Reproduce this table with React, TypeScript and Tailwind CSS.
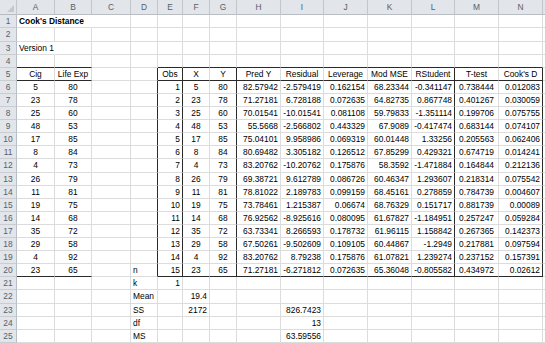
import React from "react";

const colLetters = ["A","B","C","D","E","F","G","H","I","J","K","L","M","N",""];

type Row = (string)[];

const blank = (): Row => Array(15).fill("");

const dataRows: string[][] = [
  ["5","80","1","5","80","82.57942","-2.579419","0.162154","68.23344","-0.341147","0.738444","0.012083"],
  ["23","78","2","23","78","71.27181","6.728188","0.072635","64.82735","0.867748","0.401267","0.030059"],
  ["25","60","3","25","60","70.01541","-10.01541","0.081108","59.79833","-1.351114","0.199706","0.075755"],
  ["48","53","4","48","53","55.5668","-2.566802","0.443329","67.9089","-0.417474","0.683144","0.074107"],
  ["17","85","5","17","85","75.04101","9.958986","0.069319","60.01448","1.33256","0.205563","0.062406"],
  ["8","84","6","8","84","80.69482","3.305182","0.126512","67.85299","0.429321","0.674719","0.014241"],
  ["4","73","7","4","73","83.20762","-10.20762","0.175876","58.3592","-1.471884","0.164844","0.212136"],
  ["26","79","8","26","79","69.38721","9.612789","0.086726","60.46347","1.293607","0.218314","0.075542"],
  ["11","81","9","11","81","78.81022","2.189783","0.099159","68.45161","0.278859","0.784739","0.004607"],
  ["19","75","10","19","75","73.78461","1.215387","0.06674","68.76329","0.151717","0.881739","0.00089"],
  ["14","68","11","14","68","76.92562","-8.925616","0.080095","61.67827","-1.184951","0.257247","0.059284"],
  ["35","72","12","35","72","63.73341","8.266593","0.178732","61.96115","1.158842","0.267365","0.142373"],
  ["29","58","13","29","58","67.50261","-9.502609","0.109105","60.44867","-1.2949","0.217881","0.097594"],
  ["4","92","14","4","92","83.20762","8.79238","0.175876","61.07821","1.239274","0.237152","0.157391"],
  ["23","65","15","23","65","71.27181","-6.271812","0.072635","65.36048","-0.805582","0.434972","0.02612"],
];

function buildRows(): Row[] {
  const rows: Row[] = [];
  for (let r = 1; r <= 25; r++) rows.push(blank());
  const set = (r: number, c: number, v: string) => { rows[r - 1][c] = v; };
  set(1, 0, "Cook's Distance");
  set(3, 0, "Version 1");
  const hdr5: [number, string][] = [[0,"Cig"],[1,"Life Exp"],[4,"Obs"],[5,"X"],[6,"Y"],[7,"Pred Y"],[8,"Residual"],[9,"Leverage"],[10,"Mod MSE"],[11,"RStudent"],[12,"T-test"],[13,"Cook's D"]];
  hdr5.forEach(([c, v]) => set(5, c, v));
  dataRows.forEach((d, i) => {
    const r = 6 + i;
    set(r, 0, d[0]); set(r, 1, d[1]);
    for (let k = 2; k < 12; k++) set(r, k + 2, d[k]);
  });
  set(20, 3, "n");
  set(21, 3, "k"); set(21, 4, "1");
  set(22, 3, "Mean"); set(22, 5, "19.4");
  set(23, 3, "SS"); set(23, 5, "2172"); set(23, 8, "826.7423");
  set(24, 3, "df"); set(24, 8, "13");
  set(25, 3, "MS"); set(25, 8, "63.59556");
  return rows;
}

const rows = buildRows();

function align(r: number, c: number): string {
  if (r === 5) return "justify-center";
  if (r >= 6 && r <= 20) {
    if (c === 0 || c === 1 || c === 5 || c === 6 || c === 12) return "justify-center";
    if (c === 3) return "justify-start";
    return "justify-end";
  }
  if (r >= 21) {
    if (c === 3) return "justify-start";
    return "justify-end";
  }
  return "justify-start";
}

function borderCls(r: number, c: number): string {
  const inTable = c === 0 || c === 1 || (c >= 4 && c <= 13);
  const rightBlack = r >= 5 && r <= 20 && (c === 3 || c === 4 || c === 6 || c === 11 || c === 13);
  const bottomBlack = (r === 4 || r === 5 || r === 20) && inTable;
  const hideRight = (r === 1 && (c === 0 || c === 1)) || (r === 3 && c === 0);
  const right = hideRight ? "border-r-transparent" : rightBlack ? "border-r-[#2a2a2a]" : "border-r-[#dcdcdc]";
  const bottom = bottomBlack ? "border-b-[#2a2a2a]" : "border-b-[#dcdcdc]";
  return right + " " + bottom;
}

const rowHeight = (r: number) => (r === 2 || r === 12 || r === 22 ? "h-[14px]" : "h-[13px]");

export default function App() {
  return (
    <div
      className="w-[545px] h-[343px] overflow-hidden bg-white text-black"
      style={{ fontFamily: '"Liberation Sans", Arial, sans-serif' }}
    >
      <div className="grid grid-cols-[17px_38px_37px_39px_27px_25px_27px_27px_44px_43px_44px_44px_43px_44px_44px_20px] text-[8.4px] leading-none">
        {/* header row */}
        <div className="h-[15px] bg-[#e2e5e9] border-r border-b border-r-[#c3c7cc] border-b-[#b9bec4] relative">
          <div className="absolute right-[2px] bottom-[2px] w-0 h-0 border-l-[7px] border-l-transparent border-b-[7px] border-b-[#c4c8cd]" />
        </div>
        {colLetters.map((l, i) => (
          <div
            key={i}
            className="h-[15px] bg-[#e2e5e9] border-r border-b border-r-[#c3c7cc] border-b-[#b9bec4] flex items-center justify-center text-[#56606c] text-[8.4px]"
          >
            {l}
          </div>
        ))}
        {rows.map((row, ri) => {
          const r = ri + 1;
          return (
            <React.Fragment key={r}>
              <div
                className={
                  rowHeight(r) +
                  " bg-[#e2e5e9] border-r border-b border-r-[#b9bec4] border-b-[#c9cdd2] flex items-center justify-center text-[#56606c] text-[8.4px]"
                }
              >
                {r}
              </div>
              {row.map((v, c) => (
                <div
                  key={c}
                  className={
                    rowHeight(r) +
                    " border-r border-b flex items-center px-[2px] whitespace-nowrap overflow-visible relative " +
                    borderCls(r, c) +
                    " " +
                    align(r, c) +
                    (r === 1 ? " font-bold" : "")
                  }
                >
                  {v}
                </div>
              ))}
            </React.Fragment>
          );
        })}
      </div>
    </div>
  );
}
